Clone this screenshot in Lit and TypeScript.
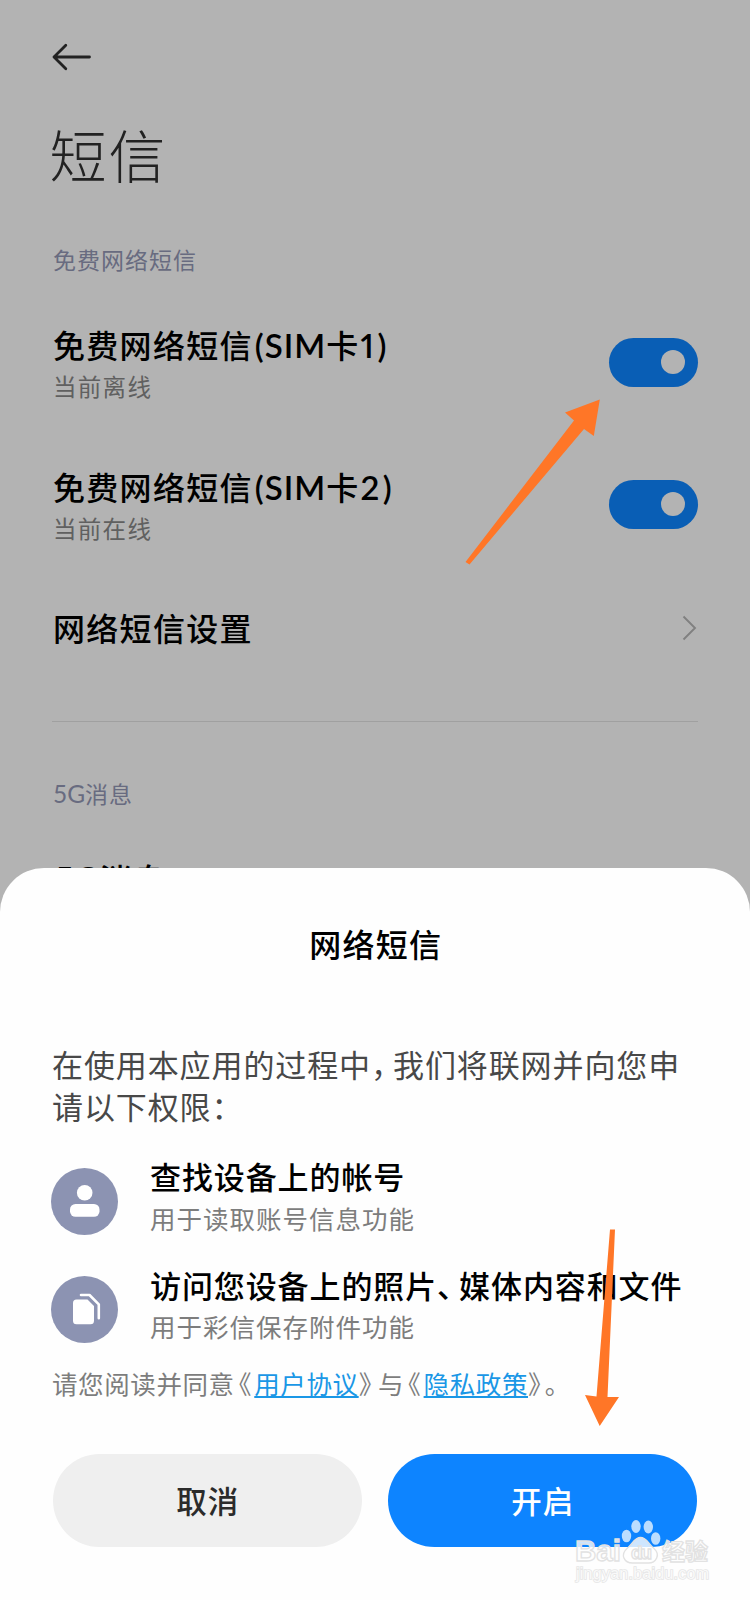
import { LitElement, html, css, svg } from "lit";
import { customElement, property } from "lit/decorators.js";

@customElement("mi-switch")
class MiSwitch extends LitElement {
  static styles = css`
    :host { display: block; flex: none; }
    .track {
      box-sizing: border-box;
      width: 89.500px; height: 49px;
      border-radius: 25px;
      background: #095eb5;
      display: flex; align-items: center; justify-content: flex-end;
      padding-right: 13px;
    }
    .knob { width: 24px; height: 24px; border-radius: 50%; background: #b3b3b3; }
  `;
  render() {
    return html`<div class="track"><div class="knob"></div></div>`;
  }
}

@customElement("permission-item")
class PermissionItem extends LitElement {
  @property() icon = "account";
  @property() note = "";
  static styles = css`
    :host { display: flex; height: 108.8px; align-items: flex-start; }
    .badge { flex: none; width: 67px; height: 67px; margin: 11.300px 32px 0 -2px; display: block; }
    .text { white-space: nowrap; }
    .name { font-size: 31px; letter-spacing: 0.9px; font-weight: 500; line-height: 40px; color: #000; margin-top: -0.300px; }
    .note { font-size: 25.5px; letter-spacing: 1px; line-height: 34px; color: #7d7d7d; margin-top: 4.500px; }
  `;
  render() {
    const glyph =
      this.icon === "account"
        ? svg`<circle cx="33.7" cy="24.7" r="7.8" fill="#fff"/><rect x="19" y="36" width="29.500" height="12.800" rx="5.500" fill="#fff"/>`
        : svg`<path d="M25.500 23.500h11l6.500 6.500v14.800a3.500 3.500 0 0 1-3.500 3.500h-14a3.500 3.500 0 0 1-3.500-3.500V27a3.500 3.500 0 0 1 3.500-3.500z" fill="#fff"/>
              <path d="M30 19h8.500l9.300 9.300v14" fill="none" stroke="#fff" stroke-width="2.600" stroke-linecap="round" stroke-linejoin="round"/>`;
    return html`
      <svg class="badge" viewBox="0 0 67 67"><circle cx="33.5" cy="33.5" r="33.500" fill="#8c93b2"/>${glyph}</svg>
      <div class="text">
        <div class="name"><slot></slot></div>
        <div class="note">${this.note}</div>
      </div>`;
  }
}

@customElement("app-root")
class AppRoot extends LitElement {
  static styles = css`
    :host {
      display: block; position: relative; width: 750px; height: 1600px; overflow: hidden;
      background: #b3b3b3;
      font-family: "Noto Sans CJK SC", sans-serif;
    }
    .settings { padding: 0 52px 0 53px; display: flex; flex-direction: column; white-space: nowrap; }
    .back { width: 40px; height: 28px; margin: 43px 0 0 -1px; display: block; }
    h1 { margin: 41.500px 0 0 -3.500px; font-size: 57px; font-weight: 300; letter-spacing: 2px; line-height: 80px; color: #222; }
    .group { font-size: 23px; letter-spacing: 1px; line-height: 30px; color: #686b80; margin-top: 51.500px; }
    .group.second { margin-top: 56.500px; }
    .row { display: flex; justify-content: space-between; align-items: center; height: 84px; }
    .row.sim { margin-top: 46px; }
    .row.sim + .row.sim { margin-top: 58px; }
    .title { font-size: 32px; letter-spacing: 1.300px; font-weight: 500; line-height: 44px; color: #000; }
    .latin { font-family: Lato, "Noto Sans CJK SC", sans-serif; font-size: 33px; font-weight: 600; letter-spacing: 1px; line-height: 1; }
    .latin.open { margin-left: 2px; }
    .latin.close { letter-spacing: 3.500px; font-feature-settings: "pnum"; margin-left: 1px; }
    .latin.small { font-size: 24.500px; font-weight: 400; letter-spacing: 0; }
    .latin.big { letter-spacing: 0.500px; font-size: 34px; margin-left: 1px; }
    .sub { font-size: 23.500px; letter-spacing: 1.300px; line-height: 34px; color: #606060; margin-top: 3px; }
    .row.link { margin-top: 38.500px; }
    .chevron { width: 16px; height: 28px; display: block; margin-top: 2px; }
    .rule { height: 1px; background: #a0a0a0; margin: 52px 0 0 -1px; }
    .clipped { margin-top: 48px; }

    .sheet {
      position: absolute; left: 0; right: 0; top: 868px; bottom: 0; box-sizing: border-box;
      background: #fefefe; border-radius: 44px 44px 0 0; padding: 53px 53px 0;
      display: flex; flex-direction: column;
    }
    h2 { margin: 0; text-align: center; font-size: 32px; letter-spacing: 1.200px; font-weight: 500; line-height: 44px; color: #000; padding-left: 1.500px; }
    .intro { margin: 77.500px -20px 0 -1px; font-size: 31px; letter-spacing: 0.9px; line-height: 42.400px; color: #484848; white-space: nowrap; }
    .tight { letter-spacing: -9px; }
    .items { margin-top: 29px; }
    .agree { font-size: 25.500px; letter-spacing: 0.6px; line-height: 36px; color: #7d7d7d; margin: -9.400px 0 0 -1px; white-space: nowrap; }
    .agree .half { font-feature-settings: "halt"; letter-spacing: 6.500px; }
    .agree .open { padding-left: 4px; letter-spacing: 2.800px; }
    .agree .last { letter-spacing: 4px; }
    a { color: #1a97e6; text-decoration: underline; text-decoration-thickness: 1.500px; text-underline-offset: 2px; }
    .actions { display: grid; grid-template-columns: 1fr 1fr; gap: 26px; margin-top: 53.500px; }
    button {
      height: 93px; border: 0; border-radius: 47px; font: 500 30.500px/44px "Noto Sans CJK SC", sans-serif;
      letter-spacing: 1px; background: #efefef; color: #2b2b2b; padding: 0 0 2px 0.500px;
    }
    .primary { background: #0d84ff; color: #fff; }
    .overlay { position: absolute; inset: 0; width: 750px; height: 1600px; pointer-events: none; }
    .wm { font-family: "Noto Sans CJK SC", sans-serif; fill: #fff; fill-opacity: 0.8; stroke: #e2e2e2; stroke-width: 1.300px; }
    .toe { stroke: none; fill-opacity: 0.72; }
    .latin-wm { font-family: "Liberation Sans", sans-serif; }
    .fine { stroke: #e6e6e6; paint-order: stroke; stroke-width: 1.600px; }
  `;

  render() {
    return html`
      <div class="settings">
        <svg class="back" viewBox="0 0 40 28"><path d="M37.500 14H2M13.800 2.300L2 14l11.800 11.700" fill="none" stroke="#222" stroke-width="2.800" stroke-linecap="round" stroke-linejoin="round"/></svg>
        <h1>短信</h1>
        <div class="group">免费网络短信</div>
        ${[
          ["1", "当前离线"],
          ["2", "当前在线"],
        ].map(
          ([n, s]) => html`<div class="row sim">
            <div>
              <div class="title">免费网络短信<span class="latin open">(SIM</span>卡<span class="latin close">${n})</span></div>
              <div class="sub">${s}</div>
            </div>
            <mi-switch></mi-switch>
          </div>`
        )}
        <div class="row link">
          <div class="title">网络短信设置</div>
          <svg class="chevron" viewBox="0 0 16 28"><path d="M1.500 2.500L13 14 1.500 25.500" fill="none" stroke="#808080" stroke-width="1.900"/></svg>
        </div>
        <div class="rule"></div>
        <div class="group second"><span class="latin small">5G</span>消息</div>
        <div class="title clipped"><span class="latin big">5G</span>消息</div>
      </div>

      <div class="sheet">
        <h2>网络短信</h2>
        <div class="intro">在使用本应用的过程中<span class="tight">，</span>我们将联网并向您申<br />请以下权限：</div>
        <div class="items">
          <permission-item icon="account" note="用于读取账号信息功能">查找设备上的帐号</permission-item>
          <permission-item icon="files" note="用于彩信保存附件功能">访问您设备上的照片<span class="tight">、</span>媒体内容和文件</permission-item>
        </div>
        <div class="agree">请您阅读并同意<span class="half open">《</span><a>用户协议</a><span class="half">》</span>与<span class="half open">《</span><a>隐私政策</a><span class="half last">》</span>。</div>
        <div class="actions">
          <button>取消</button>
          <button class="primary">开启</button>
        </div>
      </div>

      <svg class="overlay" viewBox="0 0 750 1600">
        <g fill="#ff7627">
          <path d="M465.500 562L574 420.500 565 412.500 599.800 399.500 593.800 436 584 429 469.500 564.500z"/>
          <path d="M610 1229.500h5L607.500 1397h11.500L599.700 1426 585 1395l11.500 1.500z"/>
        </g>
        <g class="wm">
          <text class="latin-wm" x="575" y="1560.500" font-size="30" font-weight="700" textLength="46" lengthAdjust="spacingAndGlyphs">Bai</text>
          <ellipse class="toe" cx="626.500" cy="1536" rx="4.700" ry="6.300"/>
          <ellipse class="toe" cx="636" cy="1526.500" rx="4.700" ry="6.500"/>
          <ellipse class="toe" cx="648.300" cy="1527" rx="4.700" ry="6.500"/>
          <ellipse class="toe" cx="655.700" cy="1538.500" rx="4.700" ry="6.300"/>
          <path d="M640.500 1537.500c6 0 8 6.500 13 10.500 8 7 2 15-5 15h-16c-8 0-13-8-5-15 5-4 7-10.500 13-10.500z"/>
          <text class="latin-wm" x="631" y="1559" font-size="19" font-weight="700" textLength="21">du</text>
          <text x="662" y="1560" font-size="23" font-weight="700" textLength="46">经验</text>
          <text class="latin-wm fine" x="576" y="1579" font-size="16" textLength="133">jingyan.baidu.com</text>
        </g>
      </svg>
    `;
  }
}
